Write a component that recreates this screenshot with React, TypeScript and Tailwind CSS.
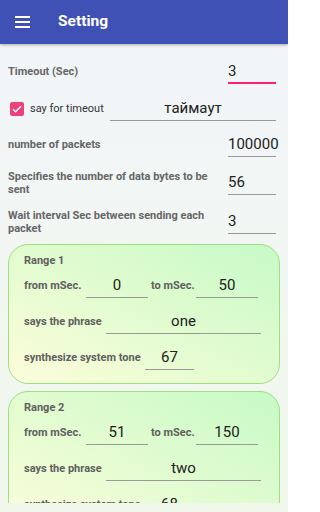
import React from "react";

const font = { fontFamily: "Roboto, 'Noto Sans', sans-serif" };

function Field({
  value,
  className,
  center,
  focused,
}: {
  value: string;
  className: string;
  center?: boolean;
  focused?: boolean;
}) {
  return (
    <div
      className={`h-[24px] flex items-center text-[15px] font-normal leading-none text-[#212121] ${
        center ? "justify-center" : ""
      } ${
        focused
          ? "border-b-2 border-[#ff1f6d]"
          : "border-b-[1.5px] border-[#9a9a9a]"
      } ${className}`}
    >
      {value}
    </div>
  );
}

function RangeCard({
  n,
  from,
  to,
  phrase,
  tone,
}: {
  n: number;
  from: string;
  to: string;
  phrase: string;
  tone: string;
}) {
  return (
    <div className="mx-2 rounded-[20px] border-[1.5px] border-[#9ee07c] bg-gradient-to-tr from-[#fcfdda] to-[#c6fac6] pl-[15px] pr-[18px] pt-[9px] pb-[13px] text-[#5f5f5f] font-bold">
      <div className="text-[11px] leading-[14px]">Range {n}</div>
      <div className="mt-[6px] flex items-center text-[11px]">
        <span className="w-[62px]">from mSec.</span>
        <Field value={from} center className="w-[62px]" />
        <span className="w-[48px] pl-[3px]">to mSec.</span>
        <Field value={to} center className="w-[62px]" />
      </div>
      <div className="mt-[12px] flex items-center text-[11px]">
        <span className="w-[82px]">says the phrase</span>
        <Field value={phrase} center className="flex-1" />
      </div>
      <div className="mt-[12px] flex items-center text-[11px]">
        <span className="w-[121px]">synthesize system tone</span>
        <Field value={tone} center className="w-[49px]" />
      </div>
    </div>
  );
}

export default function App() {
  return (
    <div
      className="w-[288px] h-[512px] overflow-hidden flex flex-col bg-gradient-to-b from-[#f3f5fa] to-[#f0f8ec]"
      style={font}
    >
      {/* App bar */}
      <div className="h-[44px] shrink-0 bg-[#3f51b5] flex items-center shadow-[0_1px_3px_rgba(0,0,0,0.3)]">
        <div className="ml-[15px] w-[15px] flex flex-col gap-[3px]">
          <div className="h-[2px] bg-white" />
          <div className="h-[2px] bg-white" />
          <div className="h-[2px] bg-white" />
        </div>
        <span className="ml-[28px] text-white text-[15.5px] font-bold">Setting</span>
      </div>

      <div className="h-[459px] overflow-hidden">
        <div className="pt-[16px] pl-2 pr-[12px] text-[11px] text-[#666] font-bold">
          <div className="flex items-center justify-between">
            <span>Timeout (Sec)</span>
            <Field value="3" focused className="w-[48px]" />
          </div>
          <div className="mt-[13px] flex items-center">
            <div className="ml-[2px] w-[14px] h-[14px] rounded-[2px] bg-[#f0407a] flex items-center justify-center">
              <svg viewBox="0 0 24 24" className="w-[12px] h-[12px]" fill="none" stroke="white" strokeWidth="3">
                <path d="M4 12.5l5 5L20 6.5" />
              </svg>
            </div>
            <span className="ml-[6px] w-[80px] font-normal text-[#333]">say for timeout</span>
            <Field value="таймаут" center className="flex-1" />
          </div>
          <div className="mt-[12px] flex items-center justify-between">
            <span>number of packets</span>
            <Field value="100000" className="w-[48px]" />
          </div>
          <div className="mt-[13px] flex items-center justify-between">
            <span className="w-[210px] leading-[13px]">Specifies the number of data bytes to be sent</span>
            <Field value="56" className="w-[48px]" />
          </div>
          <div className="mt-[13px] flex items-center justify-between">
            <span className="w-[210px] leading-[13px]">Wait interval Sec between sending each packet</span>
            <Field value="3" className="w-[48px]" />
          </div>
        </div>
        <div className="mt-[9px] flex flex-col gap-[7px]">
          <RangeCard n={1} from="0" to="50" phrase="one" tone="67" />
          <RangeCard n={2} from="51" to="150" phrase="two" tone="68" />
        </div>
      </div>
    </div>
  );
}
